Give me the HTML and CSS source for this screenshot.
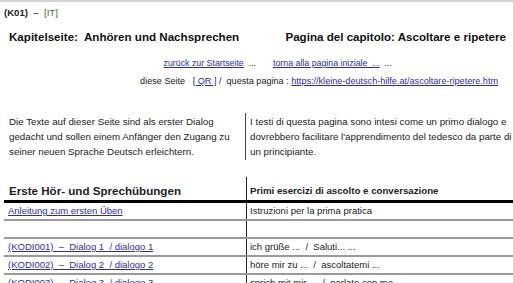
FILE: index.html
```html
<!DOCTYPE html>
<html lang="de">
<head>
  <meta charset="UTF-8" />
  <title>Kapitelseite: Anhören und Nachsprechen</title>
  <link rel="stylesheet" href="styles.css">
</head>
<body>

  <div class="topline">
    <b>(K01)</b> &nbsp;–&nbsp; <a href="#" class="lang">[IT]</a>
  </div>

  <div class="titles">
    <h1>Kapitelseite:&nbsp; Anhören und Nachsprechen</h1>
    <h1 class="title-it">Pagina del capitolo: Ascoltare e ripetere</h1>
  </div>

  <div class="nav">
    <div class="nav-de"><a href="#">zurück zur Startseite</a> &nbsp;...</div>
    <div class="nav-it"><a href="#">torna alla pagina iniziale&nbsp; ...</a> &nbsp;...</div>
  </div>

  <p class="page-url">
    diese Seite &nbsp;&nbsp;<a href="#">[ QR ]</a> / &nbsp;questa pagina : <a href="#">https://kleine-deutsch-hilfe.at/ascoltare-ripetere.htm</a>
  </p>

  <div class="intro">
    <p>Die Texte auf dieser Seite sind als erster Dialog gedacht und sollen einem Anfänger den Zugang zu seiner neuen Sprache Deutsch erleichtern.</p>
    <p class="intro-it">I testi di questa pagina sono intesi come un primo dialogo e dovrebbero facilitare l'apprendimento del tedesco da parte di un principiante.</p>
  </div>

  <table class="exercises">
    <thead>
      <tr>
        <th class="col-de">Erste Hör- und Sprechübungen</th>
        <th class="col-it">Primi esercizi di ascolto e conversazione</th>
      </tr>
    </thead>
    <tbody>
      <tr>
        <td><a href="#">Anleitung zum ersten Üben</a></td>
        <td>Istruzioni per la prima pratica</td>
      </tr>
      <tr>
        <td>&nbsp;</td>
        <td>&nbsp;</td>
      </tr>
      <tr>
        <td><a href="#">(KODI001) &nbsp;– &nbsp;Dialog 1 &nbsp;/ dialogo 1</a></td>
        <td>ich grüße ... &nbsp;/ &nbsp;Saluti... ...</td>
      </tr>
      <tr>
        <td><a href="#">(KODI002) &nbsp;– &nbsp;Dialog 2 &nbsp;/ dialogo 2</a></td>
        <td>höre mir zu ... &nbsp;/ &nbsp;ascoltatemi ...</td>
      </tr>
      <tr>
        <td><a href="#">(KODI003) &nbsp;– &nbsp;Dialog 3 &nbsp;/ dialogo 3</a></td>
        <td>sprich mit mir ... &nbsp;/ &nbsp;parlate con me ...</td>
      </tr>
    </tbody>
  </table>

</body>
</html>
```

FILE: styles.css
```css
body {
  margin: 0;
  border-top: 2px solid #d4d4d4;
  font-family: 'Liberation Sans', Arial, sans-serif;
  font-size: 9.6px;
  color: #222;
  background-color: #fff;
}
a {
  color: #2b2bc4;
}
.topline {
  padding: 4px 4px 0;
  line-height: 14px;
}
.topline .lang {
  color: #2f7a2f;
  text-decoration: none;
}
.titles {
  display: flex;
  justify-content: space-between;
  margin-top: 8px;
  padding: 0 7px 0 9px;
}
h1 {
  margin: 0;
  font-size: 11.6px;
  line-height: 18px;
  color: #111;
}
.nav {
  display: grid;
  grid-template-columns: 256px 1fr;
  column-gap: 17px;
  margin-top: 10px;
  font-size: 8.8px;
  line-height: 14px;
}
.nav-de {
  text-align: right;
}
.page-url {
  margin: 4px 0 0;
  padding-right: 15px;
  text-align: right;
  font-size: 9.1px;
  line-height: 14px;
}
.intro {
  display: grid;
  grid-template-columns: 236px 1fr;
  margin-top: 25px;
  padding-left: 9px;
}
.intro p {
  margin: 0;
  padding: 1px 6px 1px 0;
  font-size: 9.75px;
  line-height: 15px;
}
.intro .intro-it {
  border-left: 1px solid #444;
  padding: 1px 0 1px 4px;
}
.exercises {
  width: calc(100% - 4px);
  margin: 17px 0 0 4px;
  border-collapse: collapse;
}
.exercises th, .exercises td {
  padding: 0 4px;
  text-align: left;
  line-height: 16px;
}
.exercises th {
  padding-top: 6px;
  padding-bottom: 1px;
  border-bottom: 3px solid #000;
  font-size: 9.7px;
}
.exercises th.col-de {
  width: 233px;
  padding-left: 5px;
  font-size: 11.6px;
}
.exercises td:first-child {
  padding-left: 4px;
}
.exercises th.col-it, .exercises td + td {
  border-left: 1px solid #222;
  padding-left: 3px;
}
.exercises td {
  border-bottom: 2px solid #9a9a9a;
  font-size: 9.5px;
}
```
